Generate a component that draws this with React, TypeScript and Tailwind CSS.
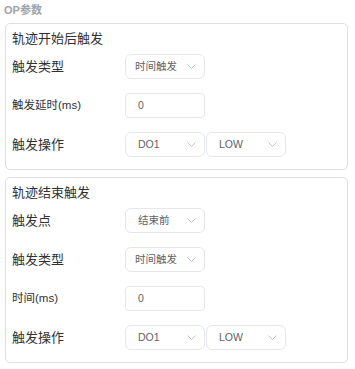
import { ReactNode } from "react";

const font = "font-['Liberation_Sans','Noto_Sans_CJK_SC',sans-serif]";

function Chevron() {
  return (
    <svg width="9" height="5" viewBox="0 0 9 5" className="shrink-0">
      <polyline
        points="0.5,0.5 4.5,4.5 8.5,0.5"
        fill="none"
        stroke="#c0c4cc"
        strokeWidth="1"
      />
    </svg>
  );
}

function Select({ value, tight }: { value: string; tight?: boolean }) {
  return (
    <div
      className={`flex h-[25px] w-[80px] items-center justify-between rounded-[6px] border border-[#e4e7ed] bg-white pr-[8px] ${tight ? "pl-[9px]" : "pl-[12px]"}`}
    >
      <span className="text-[10.5px] leading-none text-[#606266]">{value}</span>
      <Chevron />
    </div>
  );
}

function Input({ value }: { value: string }) {
  return (
    <div className="flex h-[25px] w-[80px] items-center rounded-[4px] border border-[#e4e7ed] bg-white pl-[12px]">
      <span className="text-[10.5px] leading-none text-[#606266]">{value}</span>
    </div>
  );
}

function Row({
  label,
  small,
  children,
}: {
  label: string;
  small?: boolean;
  children: ReactNode;
}) {
  return (
    <div className="flex items-center">
      <div
        className={`w-[113px] shrink-0 text-[#303133] ${small ? "text-[11.5px]" : "text-[13px]"}`}
      >
        {label}
      </div>
      <div className="flex gap-[1px]">{children}</div>
    </div>
  );
}

function Card({ title, children }: { title: string; children: ReactNode }) {
  return (
    <div className="rounded-[5px] border border-[#dcdfe6] bg-white pb-[12px] pl-[6px] pt-[6px]">
      <div className="h-[18px] text-[13px] leading-[18px] text-[#303133]">
        {title}
      </div>
      <div className="mt-[6px] flex flex-col gap-[14px]">{children}</div>
    </div>
  );
}

export default function App() {
  return (
    <div className={`h-[369px] w-[355px] bg-white ${font}`}>
      <div className="pl-[4px] pt-[2px] text-[11px] font-bold leading-[16px] text-[#a0a3a8]">
        OP参数
      </div>
      <div className="ml-[5px] mr-[7px] mt-[5px] flex flex-col gap-[7px]">
        <Card title="轨迹开始后触发">
          <Row label="触发类型">
            <Select value="时间触发" tight />
          </Row>
          <Row label="触发延时(ms)" small>
            <Input value="0" />
          </Row>
          <Row label="触发操作">
            <Select value="DO1" />
            <Select value="LOW" />
          </Row>
        </Card>
        <Card title="轨迹结束触发">
          <Row label="触发点">
            <Select value="结束前" />
          </Row>
          <Row label="触发类型">
            <Select value="时间触发" tight />
          </Row>
          <Row label="时间(ms)" small>
            <Input value="0" />
          </Row>
          <Row label="触发操作">
            <Select value="DO1" />
            <Select value="LOW" />
          </Row>
        </Card>
      </div>
    </div>
  );
}
